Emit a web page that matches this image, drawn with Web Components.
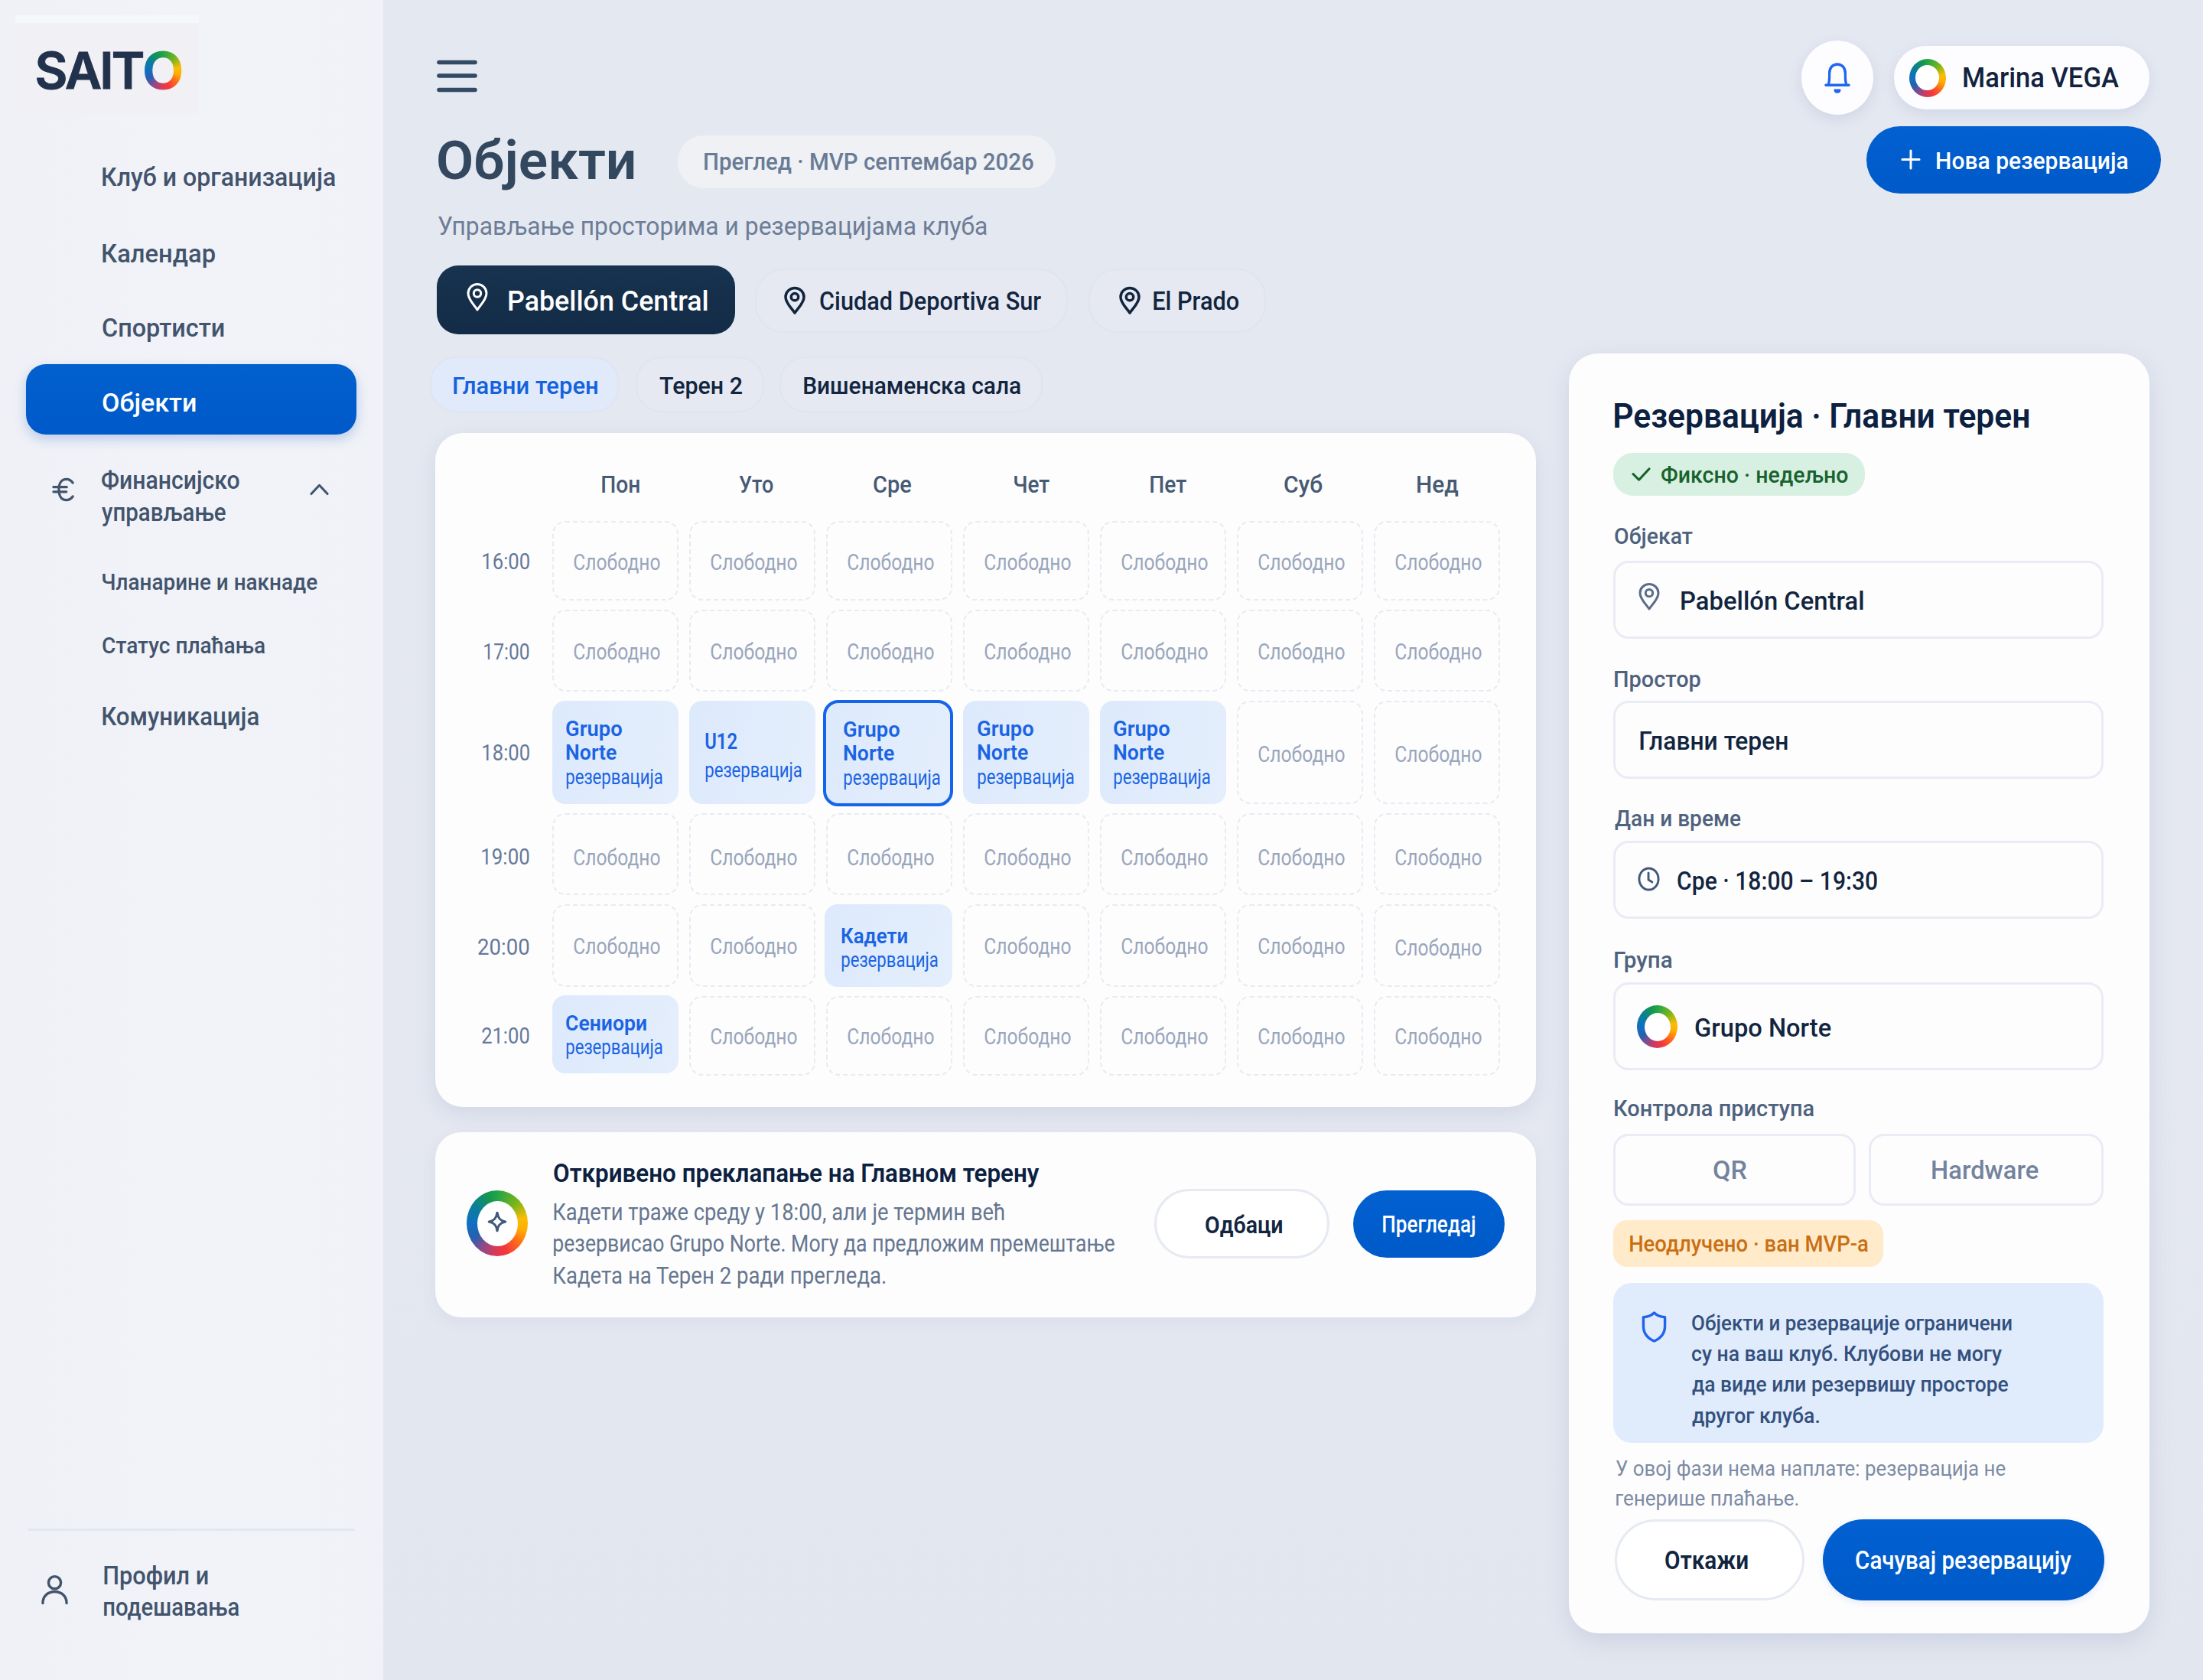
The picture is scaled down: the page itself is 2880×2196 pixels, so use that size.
<!DOCTYPE html>
<html>
<head>
<meta charset="utf-8">
<title>SAITO – Објекти</title>
<style>
html,body{margin:0;padding:0}
body{width:2880px;height:2196px;overflow:hidden;background:#e4e8f1;font-family:Roboto,"Noto Sans",sans-serif;color:#0f2341}
</style>
</head>
<body>
<saito-app></saito-app>
<script>
const FONT = 'Roboto,"Noto Sans",sans-serif';
const ruler = document.createElement('canvas').getContext('2d');

function define(name, css, html, setup) {
  const tpl = document.createElement('template');
  tpl.innerHTML = `<style>:host{display:block;box-sizing:border-box}*{box-sizing:border-box}${css}</style>${html}`;
  customElements.define(name, class extends HTMLElement {
    connectedCallback() {
      if (this.shadowRoot) return;
      const root = this.attachShadow({ mode: 'open' });
      root.appendChild(tpl.content.cloneNode(true));
      if (setup) setup(this, root);
    }
  });
}

/* One line of text whose ink spans exactly "w" pixels, with capitals centred in the line box. */
customElements.define('fit-text', class extends HTMLElement {
  connectedCallback() {
    if (this.shadowRoot) return;
    const a = (n, d) => this.hasAttribute(n) ? parseFloat(this.getAttribute(n)) : d;
    const size = a('size', 32), weight = a('weight', 500), lh = a('lh', 40), dy = a('dy', 0), w = a('w', 100);
    ruler.font = `${weight} ${size}px ${FONT}`;
    const m = ruler.measureText(this.textContent.trim());
    const k = w / (m.actualBoundingBoxLeft + m.actualBoundingBoxRight);
    const tx = m.actualBoundingBoxLeft * k;
    this.attachShadow({ mode: 'open' }).innerHTML = `<style>
      :host{display:block;flex:none;width:${w}px;height:${lh}px;white-space:nowrap;font:${weight} ${size}px/${lh}px ${FONT}}
      span{display:inline-block;vertical-align:top;transform-origin:0 50%;transform:translate(${tx}px,${dy + size * 0.0137}px) scaleX(${k})}
    </style><span><slot></slot></span>`;
  }
});

const ICONS = {
  pin: ['0 0 28 37', '<path d="M14 35C9.500 28 2 21.500 2 13.500A12 12 0 0 1 26 13.500C26 21.500 18.500 28 14 35Z"/><circle cx="14" cy="13.500" r="4.700"/>'],
  bell: ['0 0 36 42', '<path d="M2 30H34M5 30C7.500 26 7 20 7 14C7 6.500 12 2 18 2S29 6.500 29 14C29 20 28.500 26 31 30"/><path d="M14 36H22C22 39 20 40 18 40S14 39 14 36Z" fill="currentColor" stroke-width="1.500"/>'],
  plus: ['0 0 26 26', '<path d="M13 1V25M1 13H25"/>'],
  check: ['0 0 26 20', '<path d="M2 9.500L10 18L24 2"/>'],
  clock: ['0 0 30 32', '<ellipse cx="15" cy="16" rx="13" ry="14"/><path d="M14.500 8V17L19.500 20"/>'],
  shield: ['0 0 34 42', '<path d="M17 2C13 6 8 7.500 2.500 8V20C2.500 30 9 36.500 17 40C25 36.500 31.500 30 31.500 20V8C26 7.500 21 6 17 2Z"/>'],
  chevron: ['0 0 26 16', '<path d="M2 14.500L13 2.500L24 14.500"/>'],
  user: ['0 0 36 40', '<circle cx="18" cy="11" r="8.300"/><path d="M2 38.500C2 29 9 23 18 23S34 29 34 38.500"/>'],
  euro: ['0 0 30 34', '<path d="M28 7.500C25.500 4 22.500 2.500 19 2.500C12.500 2.500 8.500 8 8.500 17S12.500 31.500 19 31.500C22.500 31.500 25.500 30 28 26.500M1 13.500H19.500M1 20H19"/>'],
  burger: ['0 0 53 43', '<path d="M3 3.500H50M3 21H50M3 39.500H50"/>'],
  spark: ['0 0 28 30', '<path d="M14 2.500C15 10 18 13.500 25.500 15C18 16.500 15 20 14 27.500C13 20 10 16.500 2.500 15C10 13.500 13 10 14 2.500Z"/>']
};
define('ui-icon', ':host{flex:none;display:block}svg{display:block;width:100%;height:100%;overflow:visible}', '', (el, root) => {
  const [vb, body] = ICONS[el.getAttribute('name')];
  el.style.width = el.getAttribute('w') + 'px';
  el.style.height = el.getAttribute('h') + 'px';
  root.innerHTML += `<svg viewBox="${vb}" preserveAspectRatio="none" fill="none" stroke="currentColor" stroke-width="${el.getAttribute('sw') || 3}" stroke-linecap="round" stroke-linejoin="round">${body}</svg>`;
});

const WHEEL = 'conic-gradient(#22a548,#7ab51c 12%,#fbbc05 22%,#ffae00 29%,#ff6a1a 37%,#f5383b 45%,#d93a55 51%,#8a4a8c 59%,#2a5fae 66%,#0f70c2 75%,#0b7f96 86%,#14964f 95%,#22a548)';
define('ring-mark', `:host{flex:none;border-radius:50%;background:${WHEEL}}div{width:100%;height:100%;border-radius:50%;background:#fff;display:flex;align-items:center;justify-content:center}`,
  '<div><slot></slot></div>', el => {
    el.style.width = el.getAttribute('w') + 'px';
    el.style.height = el.getAttribute('h') + 'px';
    el.style.padding = el.getAttribute('t') + 'px';
  });

define('nav-item', ':host{display:flex;align-items:center;height:var(--h,92px);margin-left:34px;width:431.500px;padding-left:99.500px;border-radius:26px;color:#42546d}:host([active]){background:linear-gradient(#0260cf,#0059c8);color:#fff;box-shadow:0 6px 16px rgba(40,100,200,.28)}', '<slot></slot>');

define('app-sidebar', `
:host{width:501px;height:2196px;flex:none;display:flex;flex-direction:column;background:linear-gradient(90deg,#eff1f6,#f2f3f8 50%,#f1f2f7);color:#42546d}
.logo{margin:20px 0 0 20px;width:240px;height:130px;border-top:10px solid #f5f7fb;background:#f0f0f5;padding:42px 0 0 25.500px;display:flex;align-items:flex-start;font:700 66px/40px Inter,sans-serif;color:#22324c}
.logo b{letter-spacing:-2.800px;font-weight:600;-webkit-text-stroke:1px #22324c}
.logo i{font-style:normal;font-weight:600;color:transparent;background:${WHEEL};-webkit-background-clip:text;background-clip:text;line-height:62px;margin:-11px 0 0 -.500px;-webkit-text-stroke:1px transparent;transform-origin:0 50%;transform:scaleX(1.070)}
nav{margin-top:35px;display:flex;flex-direction:column}
.group{display:flex;height:84px;margin-top:37px;padding-left:69px}
.group .t{margin-left:36px;width:272px;padding-top:2px}
.foot{margin:auto 0 0 37px;width:427px;border-top:3px solid #e3e7f0;height:198.500px;padding:38px 0 0 17px;display:flex}
.foot ui-icon{margin-top:19px}.foot .t{margin-left:46.500px}
`, `
<div class="logo"><b>SAIT</b><i>O</i></div>
<nav>
<nav-item><fit-text w="304" size="34">Клуб и организација</fit-text></nav-item>
<nav-item style="margin-top:7px"><fit-text w="147" size="34" dy=".5">Календар</fit-text></nav-item>
<nav-item style="margin-top:6px"><fit-text w="159" size="34">Спортисти</fit-text></nav-item>
<nav-item active style="margin-top:2px"><fit-text w="122" size="34" dy="4">Објекти</fit-text></nav-item>
<div class="group"><ui-icon name="euro" w="28" h="32" sw="3.500" style="margin-top:19px"></ui-icon>
<div class="t"><fit-text w="180" size="33" lh="41">Финансијско</fit-text><fit-text w="162" size="33" lh="41" dy=".5">управљање</fit-text></div>
<ui-icon name="chevron" w="25" h="15" sw="3.200" style="margin-top:27px"></ui-icon></div>
<nav-item style="--h:82px;margin-top:30px"><fit-text w="281" size="30" dy="1">Чланарине и накнаде</fit-text></nav-item>
<nav-item style="--h:82px"><fit-text w="212" size="30" dy="2">Статус плаћања</fit-text></nav-item>
<nav-item style="--h:82px;margin-top:11px"><fit-text w="204" size="34" dy=".5">Комуникација</fit-text></nav-item>
</nav>
<div class="foot"><ui-icon name="user" w="35" h="39" sw="3.500"></ui-icon>
<div class="t"><fit-text w="136" size="34" lh="41.500">Профил и</fit-text><fit-text w="176" size="34" lh="41.500">подешавања</fit-text></div></div>`);

define('chip-pill', `:host{display:flex;flex:none;align-items:center;border:2px solid #dfe4ee;background:#e6e9f2;color:#12253f}
:host([dark]){background:linear-gradient(#17334f,#132b46);border:0;color:#fff}
:host([on]){background:#e0eafb;color:#1462dd}`, '<slot></slot>');

define('pill-button', `:host{display:flex;flex:none;align-items:center;justify-content:center;border:3px solid #e6eaf1;background:#fff;color:#12253f}
:host([primary]){background:linear-gradient(#0260d0,#005ac9);border:0;color:#fff}`, '<slot></slot>');

define('slot-cell', `:host{display:flex;flex-direction:column;justify-content:center;border-radius:17px;color:#1a64e4;padding-left:18px}
:host([free]){border:2px dashed #e7ebf2;align-items:center;color:#9aa6bc;padding-left:3px}
:host([busy]){background:linear-gradient(100deg,#ddeafc,#e4eefc)}
:host([sel]){border:4px solid #1464ec;margin:-1px -1px -3px -4px;border-radius:20px;padding-left:22.500px}`, '<slot></slot>');

const FREE = dy => `<slot-cell free><fit-text w="113" size="29.500" weight="400" dy="${dy}">Слободно</fit-text></slot-cell>`;
const grupo = (o = '') => `<slot-cell busy ${o}><fit-text w="73.500" size="28.500" lh="31.500" weight="600">Grupo</fit-text><fit-text w="66" size="28.500" lh="31.500" weight="600">Norte</fit-text><fit-text w="126" size="27.500" lh="31" weight="400">резервација</fit-text></slot-cell>`;
const rows = [
  ['16:00', 61.5, 0.5, Array(7).fill(FREE(1.5))],
  ['17:00', 59, 0.5, Array(7).fill(FREE(0.5))],
  ['18:00', 61.5, 0, [grupo(),
    `<slot-cell busy style="padding-left:20.500px"><fit-text w="41.500" size="29" lh="37" weight="600" dy="4">U12</fit-text><fit-text w="126" size="27.500" lh="37" weight="400" dy="4">резервација</fit-text></slot-cell>`,
    grupo('sel'), grupo('style="padding-left:19px"'), grupo(), FREE(2), FREE(2)]],
  ['19:00', 62, 2.5, Array(7).fill(FREE(4))],
  ['20:00', 67, 1.5, [FREE(1), FREE(1),
    `<slot-cell busy style="margin-left:-2px;padding-left:22px"><fit-text w="86" size="28.500" lh="31" weight="600" dy="3">Кадети</fit-text><fit-text w="126" size="27.500" lh="31" weight="400" dy="3">резервација</fit-text></slot-cell>`,
    FREE(1), FREE(1), FREE(1), FREE(2.5)]],
  ['21:00', 62, -0.5, [
    `<slot-cell busy style="margin:-1px 0 3px"><fit-text w="105" size="28.500" lh="31" weight="600" dy="1">Сениори</fit-text><fit-text w="126" size="27.500" lh="31" weight="400" dy="1">резервација</fit-text></slot-cell>`,
    ...Array(6).fill(FREE(0.5))]]
];
const days = [['Пон', 49, 14], ['Уто', 45, 10], ['Сре', 49.5, 8], ['Чет', 46, 15], ['Пет', 47, 13], ['Суб', 50, 8], ['Нед', 54, 3]];
define('week-schedule', `
:host{display:grid;grid-template-columns:139.500px repeat(7,165px);grid-template-rows:103px 104px 107px 135px 107px 108px 104px;column-gap:14px;row-gap:12px;height:881px;width:1439px;background:#fdfdfe;border-radius:36px;box-shadow:0 8px 26px rgba(90,110,160,.14)}
.day{display:flex;align-items:center;justify-content:center;color:#475a74}
.hour{display:flex;align-items:center;justify-content:flex-end;padding-right:16px;color:#66799a}
`, '<div></div>' + days.map(([d, w, o]) => `<div class="day" style="padding-left:${o}px"><fit-text w="${w}" size="30.500" dy="16">${d}</fit-text></div>`).join('') +
  rows.map(([h, w, dy, cells]) => `<div class="hour"><fit-text w="${w}" size="30" weight="400" dy="${dy}">${h}</fit-text></div>` + cells.join('')).join(''));

define('conflict-card', `
:host{display:flex;width:1439px;height:242px;background:#fdfdfe;border-radius:34px;padding:0 40px 0 41.500px;box-shadow:0 6px 20px rgba(90,110,160,.08)}
ring-mark{margin-top:76px}ui-icon{color:#42597a}
.t{margin-left:34px;width:785px;padding-top:34px;color:#66768f}.t fit-text:first-child{color:#0c2040;margin-bottom:9.500px}
`, `
<ring-mark w="80" h="86" t="13.500"><ui-icon name="spark" w="26" h="28" sw="3.500" style="margin-top:-4px"></ui-icon></ring-mark>
<div class="t"><fit-text w="635" size="33" weight="600">Откривено преклапање на Главном терену</fit-text>
<fit-text w="588.500" size="30.500" weight="400" lh="41.500">Кадети траже среду у 18:00, али је термин већ</fit-text>
<fit-text w="733.500" size="30.500" weight="400" lh="41.500">резервисао Grupo Norte. Могу да предложим премештање</fit-text>
<fit-text w="434" size="30.500" weight="400" lh="41.500">Кадета на Терен 2 ради прегледа.</fit-text></div>
<pill-button style="width:229px;height:91px;border-radius:46px;margin-top:74px;padding-left:4px"><fit-text w="100" size="31" weight="600" dy="2">Одбаци</fit-text></pill-button>
<pill-button primary style="width:198.500px;height:88px;border-radius:44px;margin:75.500px 0 0 30.500px"><fit-text w="120" size="31" dy="1">Прегледај</fit-text></pill-button>`);

define('form-field', `
:host{display:block;color:#4f627d}
.box{display:flex;align-items:center;border:3px solid #e9ecf4;border-radius:20px;width:640.500px;height:var(--h,102px);background:#fdfdfe;color:#12253f;margin-left:-1.500px}
`, '<slot name="label"></slot><div class="box"><slot></slot></div>');

define('booking-panel', `
:host{width:759px;height:1673px;background:#fdfdfe;border-radius:38px;padding:60.500px 0 0 59.500px;box-shadow:0 10px 30px rgba(90,110,160,.17);color:#0c2040;display:flex;flex-direction:column;align-items:flex-start}
.ok{display:flex;align-items:center;margin:24.500px 0 0 -1.500px;width:329px;height:56px;border-radius:26px;background:#d8f0e1;color:#17622f;padding-left:24px}
.two{display:flex;gap:17px;margin:13.500px 0 0 -1.500px}
.opt{display:flex;align-items:center;justify-content:center;border:3px solid #e9ecf4;border-radius:20px;height:93.500px;color:#74839d}
.warn{display:flex;align-items:center;margin:19px 0 0 -1.500px;width:352.500px;height:61px;border-radius:18px;background:#ffeaca;color:#c96f12;padding-left:21.500px}
.info{display:flex;margin:21px 0 0 -1.500px;width:641px;height:209px;border-radius:24px;background:#e0ebfc;color:#33507d;padding:33px 0 0 36.500px}
.info ui-icon{color:#2263ee;margin:4px 33px 0 0}
.note{margin:14px 0 0 2.500px;color:#7d8ba4}
.act{display:flex;gap:24px;margin-top:8px}
`, `
<fit-text w="541" size="45" weight="600" lh="45" dy="-1.500">Резервација · Главни терен</fit-text>
<div class="ok"><ui-icon name="check" w="25" h="18" sw="3.200"></ui-icon><fit-text w="243.500" size="30" dy="1" style="margin-left:14px">Фиксно · недељно</fit-text></div>
<form-field style="margin-top:33px"><fit-text slot="label" w="102" size="30" style="margin-bottom:12px">Објекат</fit-text>
<ui-icon name="pin" w="28" h="36" sw="3" style="margin:-8px 0 0 29.500px;color:#596c88"></ui-icon><fit-text w="238" size="34" dy=".5" style="margin-left:28.500px">Pabellón Central</fit-text></form-field>
<form-field style="margin-top:33px"><fit-text slot="label" w="112" size="30" style="margin-bottom:8px">Простор</fit-text><fit-text w="193" size="34" dy="1" style="margin-left:32px">Главни терен</fit-text></form-field>
<form-field style="margin-top:32.500px"><fit-text slot="label" w="165" size="30" style="margin-bottom:9px">Дан и време</fit-text>
<ui-icon name="clock" w="29" h="32" sw="3" style="margin:-3px 0 0 28.500px;color:#43587a"></ui-icon><fit-text w="261" size="34" dy=".5" style="margin-left:23.500px">Сре · 18:00 – 19:30</fit-text></form-field>
<form-field style="margin-top:34px;--h:115px"><fit-text slot="label" w="74.500" size="30" style="margin-bottom:8.500px">Група</fit-text>
<ring-mark w="53" h="56" t="9.500" style="margin:2px 0 0 28px"></ring-mark><fit-text w="178" size="34" dy="1.500" style="margin-left:22.500px">Grupo Norte</fit-text></form-field>
<fit-text w="260" size="30" style="margin-top:30px;color:#4f627d">Контрола приступа</fit-text>
<div class="two"><div class="opt" style="width:316.500px;padding-right:12px"><fit-text w="43.500" size="34">QR</fit-text></div><div class="opt" style="width:307px;padding-right:2px"><fit-text w="139" size="34">Hardware</fit-text></div></div>
<div class="warn"><fit-text w="311" size="29.500" dy="1">Неодлучено · ван MVP-а</fit-text></div>
<div class="info"><ui-icon name="shield" w="33" h="41" sw="3.500"></ui-icon><div>
<fit-text w="418" size="28.500" lh="40.400">Објекти и резервације ограничени</fit-text>
<fit-text w="405" size="28.500" lh="40.400">су на ваш клуб. Клубови не могу</fit-text>
<fit-text w="413.500" size="28.500" lh="40.400">да виде или резервишу просторе</fit-text>
<fit-text w="166" size="28.500" lh="40.400">другог клуба.</fit-text></div></div>
<div class="note"><fit-text w="509" size="28.500" weight="400" lh="39">У овој фази нема наплате: резервација не</fit-text><fit-text w="238" size="28.500" weight="400" lh="39">генерише плаћање.</fit-text></div>
<div class="act"><pill-button style="width:248.500px;height:106px;border-radius:53px;padding-right:8px"><fit-text w="107.500" size="33" weight="600" dy="1">Откажи</fit-text></pill-button>
<pill-button primary style="width:368px;height:106px;border-radius:53px;box-shadow:0 3px 10px rgba(60,120,220,.14)"><fit-text w="281.500" size="33" dy="1">Сачувај резервацију</fit-text></pill-button></div>`);

define('saito-app', `
:host{display:flex;width:2880px;height:2196px;background:linear-gradient(180deg,#e4e8f1,#e5e8f1 60%,#e2e6ef)}
main{display:flex;flex:1}
.left{margin-left:67.500px;width:1440px;padding-top:78px;flex:none}
.right{margin-left:42.500px;width:776px;flex:none}
.title{display:flex;align-items:center;margin:55.500px 0 0 4.500px;height:69px;color:#33485f}
.tag{margin-left:57.500px;width:494px;height:69px;border-radius:34px;background:#eff1f5;display:flex;align-items:center;padding-left:35px;color:#697b95}
.venues{display:flex;align-items:center;margin:32.500px 0 0 2px;height:89.500px}
.tabs{display:flex;margin:29.500px 0 27px -6.500px}
.tabs chip-pill{height:73px;border-radius:34px}
.top{display:flex;align-items:center;margin:53px 0 0 303.500px;height:97px}
.bell{width:94px;height:97px;border-radius:50%;background:#fdfdff;display:flex;justify-content:center;padding-top:29px;color:#1f66f0;box-shadow:0 6px 18px rgba(90,110,160,.15)}
.who{margin-left:27px;width:334px;height:83px;border-radius:42px;background:#fdfdff;display:flex;align-items:center;padding-left:20px;color:#12233f;box-shadow:0 6px 18px rgba(90,110,160,.14)}
`, `
<app-sidebar></app-sidebar>
<main>
<div class="left">
<ui-icon name="burger" w="53" h="43" sw="5.600" style="margin-left:2px;color:#334a65"></ui-icon>
<div class="title"><fit-text w="255.500" size="70" weight="600" lh="69" dy="-2">Објекти</fit-text><div class="tag"><fit-text w="430.500" size="30.500" dy="1">Преглед · MVP септембар 2026</fit-text></div></div>
<fit-text w="717" size="34" weight="400" style="margin:29px 0 0 4.500px;color:#6d7d96">Управљање просторима и резервацијама клуба</fit-text>
<div class="venues">
<chip-pill dark style="width:390px;height:89.500px;border-radius:28px;padding-left:39.500px"><ui-icon name="pin" w="28" h="37" sw="3" style="margin-top:-6px"></ui-icon><fit-text w="259.500" size="36" dy="2" style="margin-left:27px">Pabellón Central</fit-text></chip-pill>
<chip-pill style="width:409px;height:84px;border-radius:38px;margin:2px 0 0 26.500px;padding-left:35.500px"><ui-icon name="pin" w="28" h="36" sw="3.500"></ui-icon><fit-text w="289.500" size="33" dy="1" style="margin-left:19.500px">Ciudad Deportiva Sur</fit-text></chip-pill>
<chip-pill style="width:232px;height:84px;border-radius:38px;margin:2px 0 0 26.500px;padding-left:38px"><ui-icon name="pin" w="28" h="36" sw="3.500"></ui-icon><fit-text w="111.500" size="33" dy="1" style="margin-left:17px">El Prado</fit-text></chip-pill>
</div>
<div class="tabs">
<chip-pill on style="width:248px;padding-left:29px"><fit-text w="188.500" size="32" dy="1">Главни терен</fit-text></chip-pill>
<chip-pill style="width:168px;margin-left:21px;padding-left:29px"><fit-text w="108" size="32" dy="1">Терен 2</fit-text></chip-pill>
<chip-pill style="width:344px;margin-left:20px;padding-left:29.500px"><fit-text w="283" size="32" dy="1">Вишенаменска сала</fit-text></chip-pill>
</div>
<week-schedule></week-schedule>
<conflict-card style="margin-top:33px"></conflict-card>
</div>
<div class="right">
<div class="top"><div class="bell"><ui-icon name="bell" w="34" h="41" sw="3.500"></ui-icon></div>
<div class="who"><ring-mark w="48" h="50" t="8.500"></ring-mark><fit-text w="203" size="36" dy="0" style="margin-left:23.500px">Marina VEGA</fit-text></div></div>
<pill-button primary style="width:385px;height:88.500px;border-radius:45px;margin:14.500px 0 208.500px 389px;justify-content:flex-start;padding-left:45.500px"><ui-icon name="plus" w="24" h="25" sw="3.200"></ui-icon><fit-text w="249.500" size="32" dy=".5" style="margin-left:22.500px">Нова резервација</fit-text></pill-button>
<booking-panel></booking-panel>
</div>
</main>`);
</script>
</body>
</html>
